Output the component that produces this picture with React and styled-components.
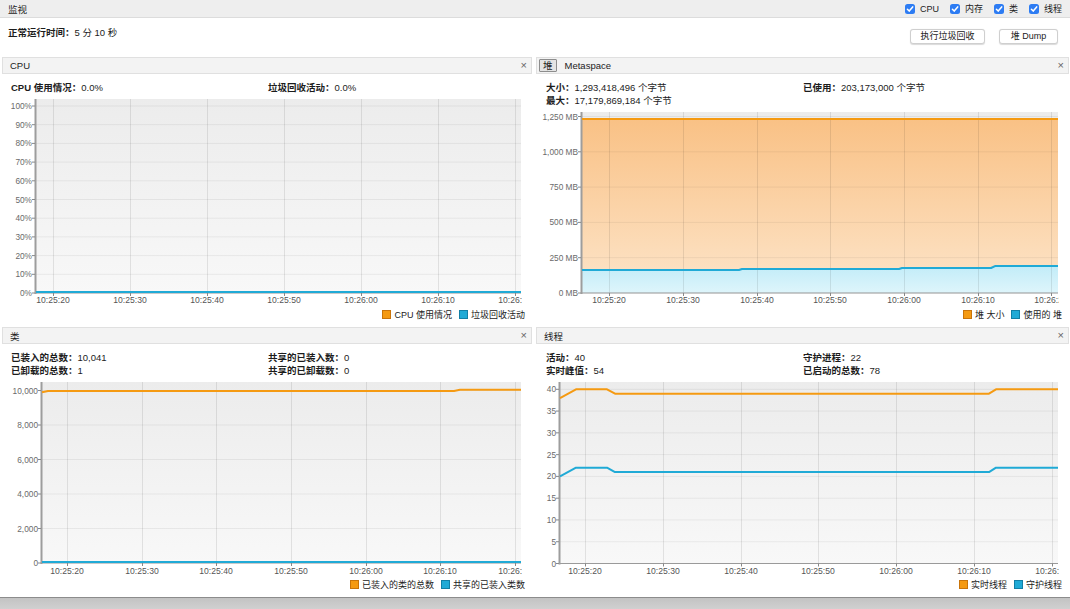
import React from 'react';
import styled, { createGlobalStyle } from 'styled-components';

const ORANGE = '#f59a12';
const ORANGE_DARK = '#c9740a';
const BLUE = '#20aad6';
const BLUE_DARK = '#127fa6';

const Global = createGlobalStyle`
  html, body { margin: 0; padding: 0; background: #fff; }
  body { font-family: "Liberation Sans", "Noto Sans CJK SC", sans-serif; color: #1c1c1c; }
  #root { width: 1070px; height: 609px; overflow: hidden; }
`;

const Page = styled.div`
  width: 1070px;
  height: 609px;
  display: flex;
  flex-direction: column;
  background: #fff;
`;

const TopBar = styled.div`
  height: 18px;
  box-sizing: border-box;
  display: flex;
  align-items: center;
  justify-content: space-between;
  padding: 0 8px 0 8px;
  background: #eeeeee;
  border-bottom: 1px solid #dcdcdc;
  font-size: 9.5px;
`;

const Checks = styled.div`
  display: flex;
  align-items: center;
  gap: 11px;
`;

const CheckItem = styled.label`
  display: flex;
  align-items: center;
  gap: 5px;
  font-size: 9px;
  color: #222;
`;

const Box = styled.span`
  width: 10px;
  height: 10px;
  border-radius: 2.5px;
  background: #2d7cf3;
  display: inline-flex;
  align-items: center;
  justify-content: center;
`;

const Check = ({ label }) => (
  <CheckItem>
    <Box>
      <svg width="10" height="10" viewBox="0 0 10 10">
        <path d="M2.4 5.2 L4.2 7.1 L7.7 2.9" fill="none" stroke="#fff" strokeWidth="1.5" strokeLinecap="round" strokeLinejoin="round" />
      </svg>
    </Box>
    {label}
  </CheckItem>
);

const UptimeRow = styled.div`
  height: 39px;
  display: flex;
  justify-content: space-between;
  align-items: flex-start;
  padding: 0 12px 0 8px;
  box-sizing: border-box;
`;

const Uptime = styled.div`
  margin-top: 9px;
  line-height: 12px;
  font-size: 9.5px;
`;

const Buttons = styled.div`
  display: flex;
  gap: 14px;
  margin-top: 11px;
`;

const Button = styled.button`
  width: ${p => p.$w}px;
  height: 15px;
  padding: 0;
  background: #fff;
  border: 1px solid #cfcfcf;
  border-radius: 3px;
  box-shadow: 0 0.5px 1px rgba(0, 0, 0, 0.15);
  font-family: inherit;
  font-size: 9px;
  color: #222;
  line-height: 13px;
`;

const Grid = styled.div`
  display: grid;
  grid-template-columns: 530px 533px;
  grid-template-rows: 266px 270px;
  column-gap: 4px;
  row-gap: 4px;
  padding: 0 1px 0 2px;
`;

const Panel = styled.section`
  display: flex;
  flex-direction: column;
  background: #fff;
  min-width: 0;
`;

const Header = styled.div`
  height: 17px;
  box-sizing: border-box;
  display: flex;
  align-items: center;
  justify-content: space-between;
  background: #f3f3f3;
  border: 1px solid #e0e0e0;
  padding: 0 4px 0 7px;
  font-size: 9.5px;
  color: #1c1c1c;
`;

const Tabs = styled.div`
  display: flex;
  align-items: center;
  gap: 6px;
  margin-left: -5px;
`;

const Tab = styled.span`
  height: 13px;
  box-sizing: border-box;
  padding: ${p => (p.$active ? '0 3px' : '0 1px')};
  border: ${p => (p.$active ? '1px solid #8d8d8d' : '1px solid transparent')};
  background: ${p => (p.$active ? '#e4e4e4' : 'transparent')};
  border-radius: 1px;
  line-height: 11px;
`;

const Close = styled.span`
  font-size: 11px;
  color: #666;
  line-height: 1;
`;

const Info = styled.div`
  height: ${p => p.$h}px;
  box-sizing: border-box;
  padding: 7px 0 0 ${p => p.$pl}px;
  display: grid;
  grid-template-columns: 257px 1fr;
  grid-auto-rows: 13px;
  font-size: 9.5px;
  line-height: 13px;
  white-space: nowrap;
`;

const B = styled.b`
  font-weight: bold;
`;

const Legend = styled.div`
  height: 16px;
  display: flex;
  justify-content: flex-end;
  align-items: center;
  gap: 7px;
  padding-right: ${p => p.$pr}px;
  font-size: 9px;
  color: #222;
`;

const LegendItem = styled.span`
  display: inline-flex;
  align-items: center;
  gap: 3px;
`;

const Swatch = styled.span`
  width: 7px;
  height: 7px;
  background: ${p => p.$c};
  border: 1px solid ${p => p.$b};
`;

const BottomBar = styled.div`
  flex: 1;
  border-top: 1px solid #8c8c8c;
  background: linear-gradient(#c3c3c3, #d0d0d0);
`;

const ChartSvg = styled.svg`
  display: block;
  flex: none;
`;

function Chart({ id, width, height, axisX, right, bgTop, zeroY, ppu, yTicks, xTicks, labelY, series }) {
  const y = v => zeroY - v * ppu;
  return (
    <ChartSvg width={width} height={height}>
      <defs>
        <linearGradient id={`${id}-bg`} x1="0" y1="0" x2="0" y2="1">
          <stop offset="0" stopColor="#ececec" />
          <stop offset="1" stopColor="#f8f8f8" />
        </linearGradient>
        <linearGradient id={`${id}-or`} x1="0" y1="0" x2="0" y2="1">
          <stop offset="0" stopColor="#f9c185" />
          <stop offset="1" stopColor="#fde5ca" />
        </linearGradient>
        <linearGradient id={`${id}-bl`} x1="0" y1="0" x2="0" y2="1">
          <stop offset="0" stopColor="#c2ecf8" />
          <stop offset="1" stopColor="#def5fb" />
        </linearGradient>
        <clipPath id={`${id}-clip`}>
          <rect x="0" y="0" width={right + 1} height={height} />
        </clipPath>
      </defs>
      <rect x={axisX} y={bgTop} width={right - axisX} height={zeroY - bgTop} fill={`url(#${id}-bg)`} />
      {series.filter(s => s.area).map((s, i) => {
        const pts = s.points.map(([x, v]) => `${x},${y(v)}`).join(' ');
        const first = s.points[0][0];
        const last = s.points[s.points.length - 1][0];
        return (
          <polygon
            key={`a${i}`}
            points={`${first},${zeroY} ${pts} ${last},${zeroY}`}
            fill={`url(#${id}-${s.area})`}
          />
        );
      })}
      {yTicks.map(t => (
        <line key={`h${t.v}`} x1={axisX} x2={right} y1={y(t.v)} y2={y(t.v)} stroke="rgba(0,0,0,0.06)" strokeWidth="1" />
      ))}
      {xTicks.map(t => (
        <line key={`v${t.x}`} x1={t.x + 0.5} x2={t.x + 0.5} y1={bgTop} y2={zeroY} stroke="rgba(0,0,0,0.09)" strokeWidth="1" />
      ))}
      <line x1={axisX} x2={right} y1={zeroY} y2={zeroY} stroke="#9a9a9a" strokeWidth="1" />
      <line x1={axisX - 0.5} x2={axisX - 0.5} y1={bgTop} y2={zeroY + 1} stroke="#9d9d9d" strokeWidth="2" />
      {yTicks.map(t => (
        <g key={`yl${t.v}`}>
          <line x1={axisX - 4} x2={axisX - 1} y1={y(t.v)} y2={y(t.v)} stroke="#888" strokeWidth="1" />
          <text x={axisX - 4} y={y(t.v) + 3} textAnchor="end" fontSize="8.3" fill="#6a6a6a" fontFamily="Liberation Sans, sans-serif">
            {t.label}
          </text>
        </g>
      ))}
      <g clipPath={`url(#${id}-clip)`}>
        {xTicks.map(t => (
          <g key={`xl${t.x}`}>
            <line x1={t.x + 0.5} x2={t.x + 0.5} y1={zeroY} y2={zeroY + 3} stroke="#888" strokeWidth="1" />
            <text x={t.x} y={labelY} textAnchor="middle" fontSize="8.6" fill="#555" fontFamily="Liberation Sans, sans-serif">
              {t.label}
            </text>
          </g>
        ))}
      </g>
      {series.map((s, i) => (
        <polyline
          key={`l${i}`}
          points={s.points.map(([x, v]) => `${x},${Math.min(y(v), zeroY - 1)}`).join(' ')}
          fill="none"
          stroke={s.color}
          strokeWidth="2"
          strokeLinejoin="round"
        />
      ))}
    </ChartSvg>
  );
}

const TIMES = ['10:25:20', '10:25:30', '10:25:40', '10:25:50', '10:26:00', '10:26:10', '10:26:20'];
const ticksAt = xs => xs.map((x, i) => ({ x, label: TIMES[i] }));

const LegendRow = ({ items, pr }) => (
  <Legend $pr={pr}>
    {items.map(([c, b, t]) => (
      <LegendItem key={t}>
        <Swatch $c={c} $b={b} />
        {t}
      </LegendItem>
    ))}
  </Legend>
);

const legendColors = {
  o: [ORANGE, ORANGE_DARK],
  b: [BLUE, BLUE_DARK],
};

export default function App() {
  return (
    <Page>
      <Global />
      <TopBar>
        <span>监视</span>
        <Checks>
          <Check label="CPU" />
          <Check label="内存" />
          <Check label="类" />
          <Check label="线程" />
        </Checks>
      </TopBar>
      <UptimeRow>
        <Uptime>
          <B>正常运行时间：</B>5 分 10 秒
        </Uptime>
        <Buttons>
          <Button $w={75}>执行垃圾回收</Button>
          <Button $w={59}>堆 Dump</Button>
        </Buttons>
      </UptimeRow>
      <Grid>
        <Panel>
          <Header>
            <span>CPU</span>
            <Close>×</Close>
          </Header>
          <Info $h={22} $pl={9}>
            <span><B>CPU 使用情况：</B>0.0%</span>
            <span><B>垃圾回收活动：</B>0.0%</span>
          </Info>
          <Chart
            id="cpu"
            width={530}
            height={210}
            axisX={34}
            right={519}
            bgTop={3}
            zeroY={197}
            ppu={187 / 100}
            yTicks={[0, 10, 20, 30, 40, 50, 60, 70, 80, 90, 100].map(v => ({ v, label: `${v}%` }))}
            xTicks={ticksAt([51, 128, 205, 282, 359, 436, 513])}
            labelY={207}
            series={[
              { color: ORANGE, points: [[34, 0], [519, 0]] },
              { color: BLUE, points: [[34, 0], [519, 0]] },
            ]}
          />
          <LegendRow
            pr={7}
            items={[
              [...legendColors.o, 'CPU 使用情况'],
              [...legendColors.b, '垃圾回收活动'],
            ]}
          />
        </Panel>

        <Panel>
          <Header>
            <Tabs>
              <Tab $active>堆</Tab>
              <Tab>Metaspace</Tab>
            </Tabs>
            <Close>×</Close>
          </Header>
          <Info $h={32} $pl={10}>
            <span><B>大小：</B>1,293,418,496 个字节</span>
            <span><B>已使用：</B>203,173,000 个字节</span>
            <span><B>最大：</B>17,179,869,184 个字节</span>
          </Info>
          <Chart
            id="heap"
            width={533}
            height={200}
            axisX={46}
            right={522}
            bgTop={6}
            zeroY={187}
            ppu={176.5 / 1250}
            yTicks={[0, 250, 500, 750, 1000, 1250].map(v => ({ v, label: v === 0 ? '0 MB' : `${v.toLocaleString('en-US')} MB` }))}
            xTicks={ticksAt([73, 147, 221, 294, 368, 442, 515])}
            labelY={197}
            series={[
              { color: ORANGE, area: 'or', points: [[46, 1233], [522, 1233]] },
              {
                color: BLUE,
                area: 'bl',
                points: [[46, 163], [203, 163], [206, 170], [363, 170], [366, 177], [455, 177], [459, 191], [522, 191]],
              },
            ]}
          />
          <LegendRow
            pr={7}
            items={[
              [...legendColors.o, '堆 大小'],
              [...legendColors.b, '使用的 堆'],
            ]}
          />
        </Panel>

        <Panel>
          <Header>
            <span>类</span>
            <Close>×</Close>
          </Header>
          <Info $h={32} $pl={9}>
            <span><B>已装入的总数：</B>10,041</span>
            <span><B>共享的已装入数：</B>0</span>
            <span><B>已卸载的总数：</B>1</span>
            <span><B>共享的已卸载数：</B>0</span>
          </Info>
          <Chart
            id="cls"
            width={530}
            height={200}
            axisX={40}
            right={519}
            bgTop={6}
            zeroY={187}
            ppu={172.5 / 10000}
            yTicks={[0, 2000, 4000, 6000, 8000, 10000].map(v => ({ v, label: v.toLocaleString('en-US') }))}
            xTicks={ticksAt([65, 140, 214, 289, 364, 438, 513])}
            labelY={198}
            series={[
              { color: ORANGE, points: [[40, 9900], [46, 9975], [452, 9975], [458, 10041], [519, 10041]] },
              { color: BLUE, points: [[40, 0], [519, 0]] },
            ]}
          />
          <LegendRow
            pr={7}
            items={[
              [...legendColors.o, '已装入的类的总数'],
              [...legendColors.b, '共享的已装入类数'],
            ]}
          />
        </Panel>

        <Panel>
          <Header>
            <span>线程</span>
            <Close>×</Close>
          </Header>
          <Info $h={32} $pl={10}>
            <span><B>活动：</B>40</span>
            <span><B>守护进程：</B>22</span>
            <span><B>实时峰值：</B>54</span>
            <span><B>已启动的总数：</B>78</span>
          </Info>
          <Chart
            id="thr"
            width={533}
            height={200}
            axisX={24}
            right={522}
            bgTop={6}
            zeroY={187.5}
            ppu={174.2 / 40}
            yTicks={[0, 5, 10, 15, 20, 25, 30, 35, 40].map(v => ({ v, label: String(v) }))}
            xTicks={ticksAt([49, 127, 205, 282, 360, 438, 516])}
            labelY={198}
            series={[
              { color: ORANGE, points: [[24, 38], [40, 40], [71, 40], [79, 39], [453, 39], [460, 40], [522, 40]] },
              { color: BLUE, points: [[24, 20], [40, 22], [71, 22], [79, 21], [453, 21], [460, 22], [522, 22]] },
            ]}
          />
          <LegendRow
            pr={7}
            items={[
              [...legendColors.o, '实时线程'],
              [...legendColors.b, '守护线程'],
            ]}
          />
        </Panel>
      </Grid>
      <BottomBar />
    </Page>
  );
}
